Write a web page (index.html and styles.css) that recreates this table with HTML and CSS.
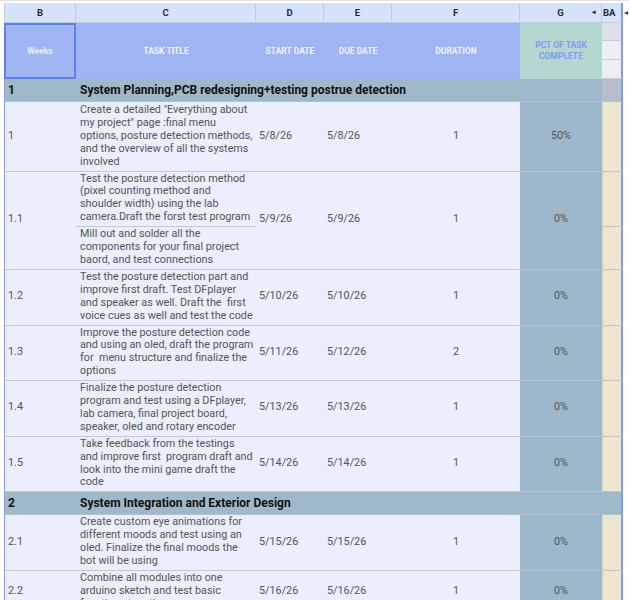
FILE: index.html
```html
<!DOCTYPE html>
<html lang="en">
<head>
    <meta charset="UTF-8">
    <meta name="viewport" content="width=device-width, initial-scale=1.0">
    <title>Project Plan</title>
    <link rel="stylesheet" href="styles.css">
</head>
<body>

    <div class="sheet">
        <table class="grid">
            <colgroup>
                <col class="col-b">
                <col class="col-c">
                <col class="col-d">
                <col class="col-e">
                <col class="col-f">
                <col class="col-g">
                <col class="col-ba">
            </colgroup>

            <!-- Column letters -->
            <thead>
                <tr class="letters">
                    <th>B</th>
                    <th>C</th>
                    <th>D</th>
                    <th>E</th>
                    <th>F</th>
                    <th class="letter-g">G<span class="hidden-arrow">&#9666;</span></th>
                    <th class="letter-ba">BA</th>
                </tr>
                <tr class="head">
                    <td rowspan="3" class="weeks">Weeks</td>
                    <td rowspan="3">TASK TITLE</td>
                    <td rowspan="3">START DATE</td>
                    <td rowspan="3">DUE DATE</td>
                    <td rowspan="3">DURATION</td>
                    <td rowspan="3" class="pct-head">PCT OF TASK<br>COMPLETE</td>
                    <td class="ba ba-head first"></td>
                </tr>
                <tr class="head"><td class="ba ba-head"></td></tr>
                <tr class="head"><td class="ba ba-head"></td></tr>
            </thead>

            <tbody>
                <!-- Phase 1 -->
                <tr class="section">
                    <td class="week">1</td>
                    <td colspan="5">System Planning,PCB redesigning+testing postrue detection</td>
                    <td class="ba ba-section"></td>
                </tr>
                <tr class="task tall">
                    <td class="week">1</td>
                    <td class="title">Create a detailed "Everything about<br>my project" page :final menu<br>options, posture detection methods,<br>and the overview of all the systems<br>involved</td>
                    <td>5/8/26</td>
                    <td>5/8/26</td>
                    <td class="num">1</td>
                    <td class="pct">50%</td>
                    <td class="ba"></td>
                </tr>
                <tr class="task">
                    <td rowspan="2" class="week">1.1</td>
                    <td class="title">Test the posture detection method<br>(pixel counting method and<br>shoulder width) using the lab<br>camera.Draft the forst test program</td>
                    <td rowspan="2">5/9/26</td>
                    <td rowspan="2">5/9/26</td>
                    <td rowspan="2" class="num">1</td>
                    <td rowspan="2" class="pct">0%</td>
                    <td class="ba"></td>
                </tr>
                <tr class="task">
                    <td class="title">Mill out and solder all the<br>components for your final project<br>baord, and test connections</td>
                    <td class="ba"></td>
                </tr>
                <tr class="task">
                    <td class="week">1.2</td>
                    <td class="title">Test the posture detection part and<br>improve first draft. Test DFplayer<br>and speaker as well. Draft the&nbsp; first<br>voice cues as well and test the code</td>
                    <td>5/10/26</td>
                    <td>5/10/26</td>
                    <td class="num">1</td>
                    <td class="pct">0%</td>
                    <td class="ba"></td>
                </tr>
                <tr class="task">
                    <td class="week">1.3</td>
                    <td class="title">Improve the posture detection code<br>and using an oled, draft the program<br>for&nbsp; menu structure and finalize the<br>options</td>
                    <td>5/11/26</td>
                    <td>5/12/26</td>
                    <td class="num">2</td>
                    <td class="pct">0%</td>
                    <td class="ba"></td>
                </tr>
                <tr class="task">
                    <td class="week">1.4</td>
                    <td class="title">Finalize the posture detection<br>program and test using a DFplayer,<br>lab camera, final project board,<br>speaker, oled and rotary encoder</td>
                    <td>5/13/26</td>
                    <td>5/13/26</td>
                    <td class="num">1</td>
                    <td class="pct">0%</td>
                    <td class="ba"></td>
                </tr>
                <tr class="task">
                    <td class="week">1.5</td>
                    <td class="title">Take feedback from the testings<br>and improve first&nbsp; program draft and<br>look into the mini game draft the<br>code</td>
                    <td>5/14/26</td>
                    <td>5/14/26</td>
                    <td class="num">1</td>
                    <td class="pct">0%</td>
                    <td class="ba"></td>
                </tr>

                <!-- Phase 2 -->
                <tr class="section">
                    <td class="week">2</td>
                    <td colspan="6">System Integration and Exterior Design</td>
                </tr>
                <tr class="task">
                    <td class="week">2.1</td>
                    <td class="title">Create custom eye animations for<br>different moods and test using an<br>oled. Finalize the final moods the<br>bot will be using</td>
                    <td>5/15/26</td>
                    <td>5/15/26</td>
                    <td class="num">1</td>
                    <td class="pct">0%</td>
                    <td class="ba"></td>
                </tr>
                <tr class="task">
                    <td class="week">2.2</td>
                    <td class="title">Combine all modules into one<br>arduino sketch and test basic<br>functions together</td>
                    <td>5/16/26</td>
                    <td>5/16/26</td>
                    <td class="num">1</td>
                    <td class="pct">0%</td>
                    <td class="ba"></td>
                </tr>
            </tbody>
        </table>
        <div class="edge"><span class="edge-arrow">&#9666;</span></div>
    </div>

</body>
</html>
```

FILE: styles.css
```css
/* General Styles */
body {
    margin: 0;
    background: #fff;
    font-family: Roboto, 'Liberation Sans', sans-serif;
    overflow: hidden;
}

.sheet {
    display: flex;
    align-items: flex-start;
    padding: 2px 0 0 4px;
    border-top: 1px solid #e3e3e3;
}

/* Table */
.grid {
    border-collapse: separate;
    border-spacing: 0;
    table-layout: fixed;
    width: 619px;
}

.col-b { width: 72px; }
.col-c { width: 180px; }
.col-d { width: 68px; }
.col-e { width: 68px; }
.col-f { width: 128px; }
.col-g { width: 82px; }
.col-ba { width: 21px; }

td, th {
    padding: 0;
    overflow: hidden;
}

/* Column letters */
.letters th {
    height: 20px;
    background: #d7e3fc;
    color: #1e2a46;
    font-size: 9.5px;
    font-weight: bold;
    border-right: 1px solid #c3cce0;
    border-bottom: 1px solid #c3cce0;
    box-sizing: border-box;
}

.letters th:first-child {
    border-left: 1px solid #c3cce0;
}

.letter-g {
    position: relative;
}

.hidden-arrow {
    position: absolute;
    right: 5px;
    top: 5px;
    font-size: 7px;
    color: #333;
}

.letters .letter-ba {
    border-right: 2px solid #7f9cf5;
    text-align: left;
    padding-left: 1px;
}

/* Header block */
.head td {
    height: 18px;
    background: #a0b6f4;
    color: #eef2fd;
    font-size: 8.5px;
    font-weight: bold;
    text-align: center;
    vertical-align: middle;
    line-height: 11px;
}

.head .weeks {
    border: 2px solid #5b80f2;
    color: #e6ecfd;
}

.head .pct-head {
    background: #b4d7d0;
    color: #7c9ef2;
}

.head .ba-head {
    background: #eceef8;
    border-bottom: 1px solid #c9ccd8;
    border-right: 2px solid #7f9cf5;
}

.head .ba-head.first {
    height: 17px;
    background: #dfe1ea;
}

/* Section rows */
.section td {
    height: 22px;
    background: #9fb9cb;
    color: #111;
    font-size: 12px;
    font-weight: bold;
    white-space: nowrap;
    border-bottom: 1px solid #b3c3d2;
    padding-left: 4px;
}

.section td:last-child {
    border-right: 2px solid #7f9cf5;
}

.section .ba-section {
    background: #b8bdcc;
}

/* Task rows */
.task td {
    background: #ebeefc;
    color: #555;
    font-size: 10.8px;
    line-height: 12.9px;
    padding: 1px 3px 2px 3px;
    vertical-align: middle;
    border-bottom: 1px solid #c4c7d3;
}

.task.tall td {
    padding-top: 2px;
}

.grid .week {
    border-left: 1px solid #7f9cf5;
    padding-left: 3px;
}

.task .title {
    padding-left: 4px;
    padding-right: 0;
    white-space: nowrap;
}

.task .num,
.task .pct {
    text-align: center;
}

.task .pct {
    background: #9db8cb;
    border-bottom-color: #b3c3d2;
}

.task .ba {
    background: #ebe6cd;
    border-right: 2px solid #7f9cf5;
    border-left: 1px solid #d9d6c8;
}

/* Right edge */
.edge {
    width: 6px;
    position: relative;
    height: 20px;
}

.edge-arrow {
    position: absolute;
    left: 1px;
    top: 5px;
    font-size: 8px;
    color: #444;
}
```
